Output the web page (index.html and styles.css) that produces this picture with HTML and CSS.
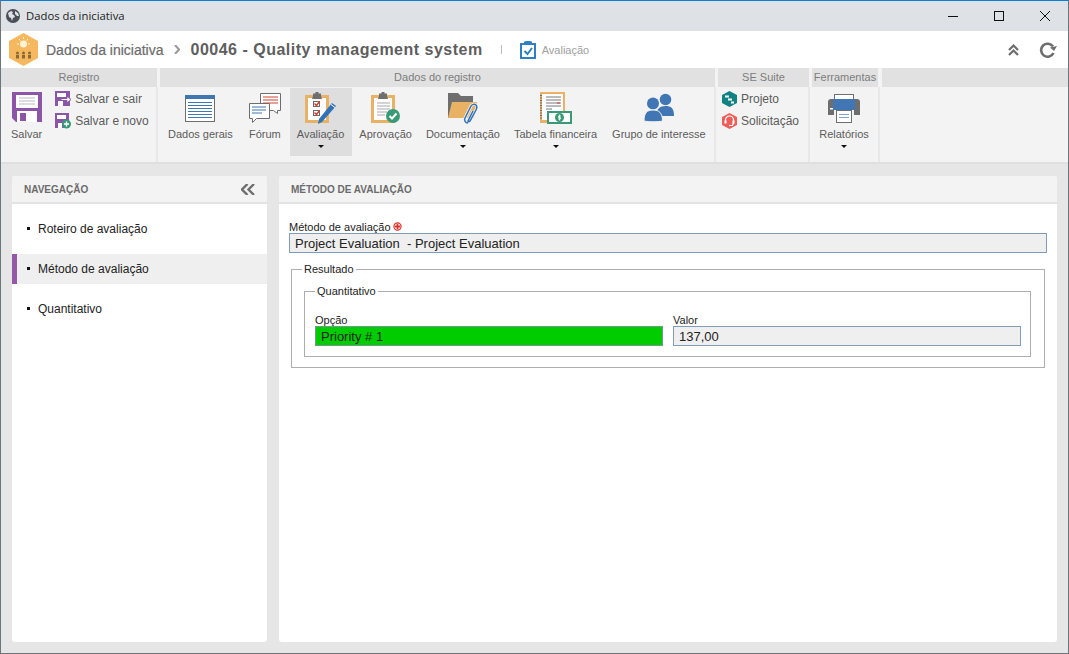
FILE: index.html
```html
<!DOCTYPE html>
<html lang="pt-BR">
<head>
<meta charset="utf-8">
<title>Dados da iniciativa</title>
<link rel="stylesheet" href="styles.css">
</head>
<body>
<div class="window">
  <div class="titlebar">
    <svg class="globe" width="14" height="14" viewBox="0 0 14 14"><circle cx="7" cy="7" r="7" fill="#4a4f55"/><path d="M2 4l3-2 2 1-1 2 2 1 1 2-2 1-1 3-1-3-2-1zM9 2l3 2 1 3-2 0-2-2z" fill="#dee1e6"/></svg>
    <span class="wintitle">Dados da iniciativa</span>
    <div class="winctrls">
      <svg width="10" height="10" viewBox="0 0 10 10"><path d="M0 5.500h10" stroke="#111" fill="none"/></svg>
      <svg width="10" height="10" viewBox="0 0 10 10"><rect x=".5" y=".5" width="9" height="9" stroke="#111" fill="none"/></svg>
      <svg width="10" height="10" viewBox="0 0 10 10"><path d="M0 0l10 10M10 0L0 10" stroke="#111" fill="none"/></svg>
    </div>
  </div>

  <div class="header">
    <svg class="logo" width="31" height="33" viewBox="0 0 31 33"><path d="M15.500 0L30 8v17l-14.500 8L1 25V8z" fill="#f5b85f"/><circle cx="15.500" cy="11" r="3.500" fill="#fff3d8"/><path d="M15.500 4v2M9 11h2M20 11h2M11 6l1.500 1.500M20 6l-1.500 1.500" stroke="#fff3d8"/><g fill="#8a6a35"><circle cx="9.500" cy="20" r="1.500"/><circle cx="15.500" cy="20" r="1.500"/><circle cx="21.500" cy="20" r="1.500"/><rect x="8" y="22" width="3" height="3.500"/><rect x="14" y="22" width="3" height="3.500"/><rect x="20" y="22" width="3" height="3.500"/></g></svg>
    <span class="crumb">Dados da iniciativa</span>
    <svg class="crumbsep" width="6" height="9" viewBox="0 0 6 9"><path d="M1 0l4 4.500L1 9" stroke="#9a9a9a" stroke-width="2" fill="none"/></svg>
    <span class="rectitle">00046 - Quality management system</span>
    <span class="pipe"></span>
    <svg class="hdricon" width="16" height="18" viewBox="0 0 16 18"><path d="M1 3h4V1.500h6V3h4v14H1z" fill="none" stroke="#2f7fc4" stroke-width="2"/><rect x="5.500" y="0" width="5" height="4" fill="#2f7fc4"/><path d="M4.500 10l3 3 4.500-6" stroke="#2f7fc4" stroke-width="2" fill="none"/></svg>
    <span class="hdrsub">Avaliação</span>
    <div class="hdrtools">
      <svg width="11" height="12" viewBox="0 0 11 12"><path d="M1 6l4.500-4.500L10 6M1 11l4.500-4.500L10 11" stroke="#6e6e6e" stroke-width="2.200" fill="none"/></svg>
      <svg width="18" height="16" viewBox="0 0 18 16"><path d="M14.500 11a6.500 6.500 0 1 1-.5-6.500" stroke="#6e6e6e" stroke-width="2.600" fill="none"/><path d="M18 4l-3 5-4-3.500z" fill="#6e6e6e"/></svg>
    </div>
  </div>

  <div class="ribbon">
    <section class="group g-reg">
      <h2 class="gtitle">Registro</h2>
      <div class="gbody">
        <div class="btn btn-save">
          <svg class="ic" width="30" height="30" viewBox="0 0 30 30"><path d="M0 0h30v30H4l-4-4z" fill="#8d55a8"/><rect x="4" y="3" width="22" height="13" fill="#fff"/><path d="M7 6h16M7 9h16M7 12h16" stroke="#b9b9c4"/><rect x="5" y="19" width="20" height="11" fill="#fff"/><rect x="8" y="21" width="6" height="8" fill="#8d55a8"/></svg>
          <span>Salvar</span>
        </div>
        <div class="minis">
          <div class="mini">
            <svg width="16" height="16" viewBox="0 0 16 16"><path d="M0 0h15v15H0z" fill="#8d55a8"/><rect x="2" y="2" width="9" height="4" fill="#fff"/><rect x="3" y="10" width="5" height="5" fill="#fff"/><path d="M6 7.500h6V5l4 3.500-4 3.500V9.500H6z" fill="#fff" stroke="#8d55a8"/></svg>
            <span>Salvar e sair</span>
          </div>
          <div class="mini">
            <svg width="16" height="16" viewBox="0 0 16 16"><path d="M0 0h14v15H0z" fill="#8d55a8"/><rect x="2" y="2" width="9" height="4" fill="#fff"/><rect x="3" y="10" width="4" height="5" fill="#fff"/><circle cx="11.500" cy="11" r="4.500" fill="#3a9a78"/><path d="M9 11h5M11.500 8.500v5" stroke="#fff" stroke-width="1.400"/></svg>
            <span>Salvar e novo</span>
          </div>
        </div>
      </div>
    </section>

    <section class="group g-dados">
      <h2 class="gtitle">Dados do registro</h2>
      <div class="gbody">
        <div class="btn">
          <svg class="ic" width="30" height="32" viewBox="0 0 30 32"><rect x=".5" y="3.500" width="29" height="26" fill="#fff" stroke="#6e6e6e"/><rect x="0" y="3" width="30" height="4" fill="#3f76b3"/><path d="M3 10.500h24M3 13.500h24M3 16.500h24M3 19.500h24M3 22.500h24M3 25.500h24" stroke="#3f76b3"/></svg>
          <span>Dados gerais</span>
        </div>
        <div class="btn btn-forum">
          <svg class="ic" width="32" height="32" viewBox="0 0 32 32"><path d="M11.500 1.500h20v17h-3v3l-4-3h-13z" fill="#fff" stroke="#6e6e6e"/><path d="M14 5h15M14 8h15M14 11h15" stroke="#d0432f"/><path d="M.5 11.500h20v15h-13l-4 4v-4h-3z" fill="#fff" stroke="#6e6e6e"/><path d="M3 15h14M3 18h14M3 21h10" stroke="#3f76b3"/></svg>
          <span>Fórum</span>
        </div>
        <div class="btn active">
          <svg class="ic" width="32" height="32" viewBox="0 0 32 32"><rect x="0" y="3" width="24" height="28" fill="#e9b163"/><rect x="3" y="6" width="18" height="22" fill="#fff"/><path d="M8 4V1.500h2.500V0h3v1.500H16V4l1 3H7z" fill="#6e6e6e"/><rect x="8.500" y="9.500" width="6" height="5" fill="#fff" stroke="#6e6e6e"/><rect x="8.500" y="18.500" width="6" height="5" fill="#fff" stroke="#6e6e6e"/><path d="M9.500 11.500l2 2 3-4M9.500 20.500l2 2 3-4" stroke="#d0432f" stroke-width="1.500" fill="none"/><path d="M27 11l4 3-14 16-4 2 1-5z" fill="#2f72b8"/><path d="M26 12.500l4 3" stroke="#fff"/></svg>
          <span>Avaliação</span>
          <i class="caret"></i>
        </div>
        <div class="btn">
          <svg class="ic" width="30" height="32" viewBox="0 0 30 32"><rect x="0" y="3" width="24" height="28" fill="#e9b163"/><rect x="3" y="6" width="18" height="22" fill="#fff"/><path d="M8 4V1.500h2.500V0h3v1.500H16V4l1 3H7z" fill="#6e6e6e"/><path d="M6 11h13M6 14h13M6 17h13M6 20h10M6 23h8" stroke="#a8a8a8"/><circle cx="22" cy="24" r="7" fill="#3a9a78"/><path d="M18.500 24l2.500 2.500 4.500-5" stroke="#fff" stroke-width="2" fill="none"/></svg>
          <span>Aprovação</span>
        </div>
        <div class="btn">
          <svg class="ic" width="32" height="32" viewBox="0 0 32 32"><path d="M1 1h10l3 3h12v6H6L3 26H1z" fill="#6e6e6e"/><path d="M5 10h25l-3 16H1z" fill="#e9b163"/><path d="M21 31c-3 0-4-3-3-5l6-12c1-2 4-2 5-1s1 3 0 5l-6 11c-1 1-2 1-2 0l5-10" stroke="#f3f3f3" stroke-width="3" fill="none"/><path d="M21 31c-3 0-4-3-3-5l6-12c1-2 4-2 5-1s1 3 0 5l-6 11c-1 1-2 1-2 0l5-10" stroke="#2f72b8" stroke-width="1.500" fill="none"/></svg>
          <span>Documentação</span>
          <i class="caret"></i>
        </div>
        <div class="btn btn-table">
          <svg class="ic" width="33" height="32" viewBox="0 0 33 32"><rect x="1" y="0" width="25" height="31" fill="#e9b163"/><rect x="3" y="2" width="21" height="26" fill="#fff"/><path d="M7 5h15M7 8h15M7 11h15M7 14h15M7 17h6" stroke="#777"/><path d="M18 11h3" stroke="#d0432f"/><path d="M2 3v24" stroke="#6e6e6e" stroke-dasharray="1 1.500" stroke-width="2"/><rect x="8" y="19" width="25" height="13" fill="#3a9a78"/><rect x="10" y="21" width="21" height="9" fill="#fff"/><circle cx="20.500" cy="25.500" r="4.500" fill="#3a9a78"/><path d="M20.500 22.500v6M22 24h-2.500v1.500h2V27H19" stroke="#fff" fill="none" stroke-width=".8"/></svg>
          <span>Tabela financeira</span>
          <i class="caret"></i>
        </div>
        <div class="btn">
          <svg class="ic" width="30" height="32" viewBox="0 0 30 32"><g fill="#3f76b3"><circle cx="21.500" cy="7.500" r="5.800"/><path d="M12 24c0-7 4-10 9.500-10S30 16 30 24z"/><circle cx="9" cy="11.500" r="6"/><path d="M0 29c0-8 3-11 9-11s9.500 3 9.500 11c-4 1-14 1-18.500 0z" stroke="#f3f3f3"/></g></svg>
          <span>Grupo de interesse</span>
        </div>
      </div>
    </section>

    <section class="group g-se">
      <h2 class="gtitle">SE Suite</h2>
      <div class="gbody">
        <div class="minis">
          <div class="mini">
            <svg width="15" height="16" viewBox="0 0 15 16"><path d="M7.500 0L15 4v8l-7.500 4L0 12V4z" fill="#0f8284"/><path d="M3 4.500h4v2H3zM6 7.500h4v2H6zM9 10.500h3v2H9z" fill="#fff"/></svg>
            <span>Projeto</span>
          </div>
          <div class="mini">
            <svg width="15" height="16" viewBox="0 0 15 16"><path d="M7.500 0L15 4v8l-7.500 4L0 12V4z" fill="#ee5f5b"/><path d="M3.500 9.500V7a4 4 0 0 1 8 0v2.500M7 12.500h3.500l1-3" stroke="#fff" stroke-width="1.200" fill="none"/><rect x="2.500" y="7.500" width="2" height="3" fill="#fff"/><rect x="10.500" y="7.500" width="2" height="3" fill="#fff"/></svg>
            <span>Solicitação</span>
          </div>
        </div>
      </div>
    </section>

    <section class="group g-tools">
      <h2 class="gtitle">Ferramentas</h2>
      <div class="gbody">
        <div class="btn">
          <svg class="ic" width="32" height="32" viewBox="0 0 32 32"><rect x="6.500" y="2.500" width="19" height="6" fill="#fff" stroke="#6e6e6e"/><path d="M3 7h26c2 0 3 1 3 3v13h-6V18H6v5H0V10c0-2 1-3 3-3z" fill="#6e6e6e"/><rect x="5" y="7" width="22" height="11" fill="#3f76b3"/><rect x="2" y="16" width="3" height="1.500" fill="#fff"/><rect x="8.500" y="18.500" width="15" height="12" fill="#fff" stroke="#6e6e6e"/><path d="M11 22.500h10M11 25.500h10" stroke="#7ea2cc"/></svg>
          <span>Relatórios</span>
          <i class="caret"></i>
        </div>
      </div>
    </section>

    <section class="group g-rest">
      <h2 class="gtitle">&nbsp;</h2>
      <div class="gbody"></div>
    </section>
  </div>

  <div class="content">
    <aside class="panel nav">
      <div class="phead">
        <h3>Navegação</h3>
        <svg width="14" height="11" viewBox="0 0 14 11"><path d="M6.500 0L1 5.500 6.500 11M13 0L7.500 5.500 13 11" stroke="#6e6e6e" stroke-width="2.400" fill="none"/></svg>
      </div>
      <ul class="navlist">
        <li class="navitem"><i class="bullet"></i>Roteiro de avaliação</li>
        <li class="navitem current"><i class="bullet"></i>Método de avaliação</li>
        <li class="navitem"><i class="bullet"></i>Quantitativo</li>
      </ul>
    </aside>

    <main class="panel main">
      <div class="phead"><h3>Método de avaliação</h3></div>
      <div class="form">
        <label class="flabel">Método de avaliação<svg class="req" width="9" height="9" viewBox="0 0 10 10"><circle cx="5" cy="5" r="4" fill="#fff" stroke="#e0322c" stroke-width="1.300"/><path d="M5 2v6M2 5h6" stroke="#e0322c" stroke-width="2"/></svg></label>
        <div class="field">Project Evaluation  - Project Evaluation</div>
        <fieldset class="fs outer">
          <legend>Resultado</legend>
          <fieldset class="fs inner">
            <legend>Quantitativo</legend>
            <div class="cols">
              <div>
                <label class="flabel">Opção</label>
                <div class="field green">Priority # 1</div>
              </div>
              <div>
                <label class="flabel">Valor</label>
                <div class="field">137,00</div>
              </div>
            </div>
          </fieldset>
        </fieldset>
      </div>
    </main>
  </div>
</div>
</body>
</html>
```

FILE: styles.css
```css
* { box-sizing: border-box; }
html, body { margin: 0; padding: 0; height: 100%; overflow: hidden; }
body { font-family: "Liberation Sans", Arial, sans-serif; font-size: 12px; color: #222; }
h2, h3, ul { margin: 0; padding: 0; font-weight: normal; list-style: none; }

.window {
  width: 1069px; height: 654px;
  display: flex; flex-direction: column;
  border: 1px solid #6f7479; border-top-color: #0a7fd6;
  background: #e6e6e6;
}

.titlebar { height: 30px; flex: none; background: #dee1e6; display: flex; align-items: center; padding-left: 5px; }
.globe { flex: none; }
.wintitle { margin: 0 0 2px 6px; font-family: "Open Sans", sans-serif; font-size: 11.300px; color: #222; }
.winctrls { margin-left: auto; display: flex; gap: 36px; padding-right: 18px; }

.header { height: 37px; flex: none; background: #fff; display: flex; align-items: center; padding-left: 7px; }
.crumb { margin-left: 7px; font-size: 14px; color: #6b6b6b; -webkit-text-stroke: .2px #6b6b6b; }
.crumbsep { margin-left: 10px; }
.rectitle { margin-left: 11px; font-size: 16px; font-weight: bold; color: #5e5e5e; letter-spacing: .5px; }
.pipe { width: 1px; height: 9px; background: #bdbdbd; margin-left: 18px; }
.hdricon { margin-left: 18px; }
.hdrsub { margin-left: 6px; font-size: 11px; color: #a0a0a0; }
.hdrtools { margin-left: auto; display: flex; align-items: center; gap: 20px; padding-right: 11px; }

.ribbon { height: 96px; flex: none; display: flex; background: #f3f3f3; border-bottom: 2px solid #dfdfdf; }
.group { display: flex; flex-direction: column; flex: none; }
.gtitle { height: 19px; line-height: 18px; flex: none; text-align: center; font-size: 11px; color: #7d7d7d; background: #e1e1e1; margin-left: 2px; margin-right: 1px; }
.gbody { flex: 1; display: flex; border-right: 2px solid #e8e8e8; }
.g-reg { width: 157px; }
.g-reg .gtitle { margin-left: 0; }
.g-dados { width: 558px; }
.g-se { width: 94px; }
.g-tools { width: 70px; }
.g-tools .gtitle { margin-right: 2px; }
.g-rest { flex: 1; }
.g-rest .gtitle { margin-right: 0; }
.g-rest .gbody { border: 0; }
.g-reg .gbody { padding-left: 7px; }
.g-dados .gbody { padding-left: 3px; }

.btn { height: 68px; margin-top: 1px; padding: 4px 7px 0; display: flex; flex-direction: column; align-items: center; font-size: 11px; color: #5c5c5c; white-space: nowrap; }
.btn span { margin-top: 3px; line-height: 14px; }
.btn .ic { flex: none; }
.btn.active { background: #dedede; padding-right: 8px; }
.btn-forum { margin-left: 2px; margin-right: 2px; }
.btn-table { margin-right: 1px; }
.caret { width: 0; height: 0; margin-top: 4px; border: 3px solid transparent; border-top: 3px solid #111; border-bottom: 0; border-left-width: 3.500px; border-right-width: 3.500px; }
.btn-save { padding: 4px 3px 0; }
.btn-save span { margin-top: 5px; }
.minis { display: flex; flex-direction: column; gap: 6px; padding-top: 4px; }
.mini { display: flex; align-items: center; gap: 4px; height: 16px; font-size: 12px; color: #5c5c5c; white-space: nowrap; }
.g-reg .minis { margin-left: 10px; }
.g-se .minis { margin-left: 6px; }
.g-tools .gbody { justify-content: center; }

.content { flex: 1; min-height: 0; display: flex; gap: 12px; padding: 12px 11px 11px; }
.panel { background: #fff; border-radius: 3px; display: flex; flex-direction: column; }
.nav { width: 255px; flex: none; }
.main { flex: 1; min-width: 0; }
.phead { height: 28px; flex: none; padding: 1px 12px 0; background: #f3f3f3; border-bottom: 2px solid #e3e3e3; border-radius: 3px 3px 0 0; display: flex; align-items: center; justify-content: space-between; }
.phead h3 { font-size: 10px; font-weight: bold; text-transform: uppercase; color: #6b6b6b; }
.navlist { padding-top: 10px; display: flex; flex-direction: column; gap: 10px; }
.navitem { height: 30px; display: flex; align-items: center; padding-left: 15px; font-size: 12px; color: #222; }
.navitem.current { background: #efefef; box-shadow: inset 5px 0 0 #9558a9; }
.bullet { width: 3px; height: 3px; background: #111; margin-right: 8px; position: relative; top: -1px; }

.form { padding: 17px 10px 0; }
.flabel { display: flex; align-items: center; height: 12px; font-size: 11px; line-height: 12px; color: #222; }
.req { margin-left: 2px; position: relative; top: -1px; }
.field { height: 20px; line-height: 19px; padding-left: 5px; font-size: 13px; color: #222; background: #efefef; border: 1px solid #7f9db9; white-space: pre; }
.field.green { background: #00cc00; border-color: #6f9a8c; }
.fs { margin: 0; min-width: 0; border: 1px solid #aeaeae; }
.fs legend { padding: 0 2px; font-size: 11px; line-height: 13px; color: #222; }
.outer { margin: 10px 2px 0; padding: 9px 13px 10px 12px; }
.outer > legend { margin-left: -2px; }
.inner { padding: 16px 9px 10px 10px; }
.cols { display: grid; grid-template-columns: 348px 348px; gap: 10px; }
```
